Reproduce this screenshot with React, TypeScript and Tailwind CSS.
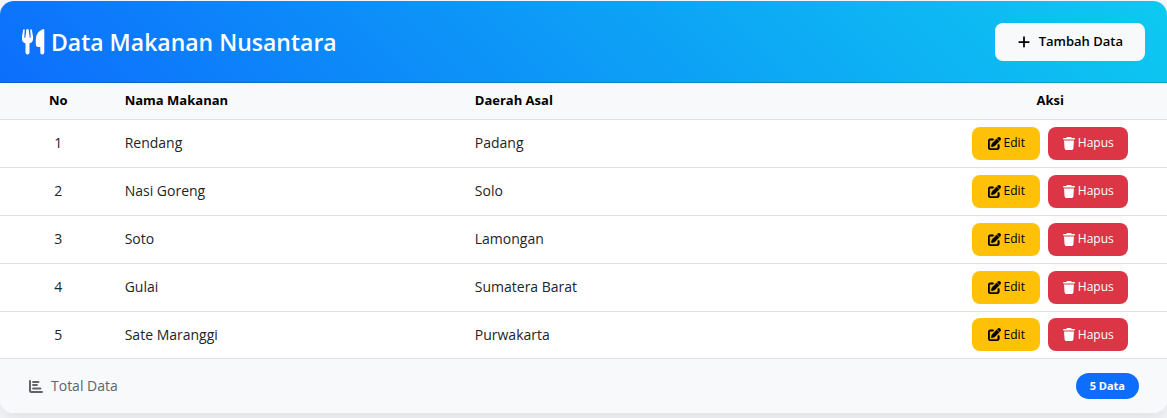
import { FaPenToSquare, FaPlus } from "react-icons/fa6";

type Food = { id: number; name: string; origin: string };

const foods: Food[] = [
  { id: 1, name: "Rendang", origin: "Padang" },
  { id: 2, name: "Nasi Goreng", origin: "Solo" },
  { id: 3, name: "Soto", origin: "Lamongan" },
  { id: 4, name: "Gulai", origin: "Sumatera Barat" },
  { id: 5, name: "Sate Maranggi", origin: "Purwakarta" },
];

function UtensilsIcon() {
  return (
    <svg viewBox="0 0 23 26" className="h-[26px] w-[23px]" fill="currentColor" aria-hidden="true">
      <path d="M1.2.7Q1.4 0 2.1.2t.6.9L2.3 8.2q0 .5.5.5t.6-.5L4.3.9Q4.4.1 5.5.1T6.7.9l.9 7.3q.1.5.6.5t.5-.5L8.300 1.100Q8.200.400 8.900.200t.9.500L11 7.500v2.300q0 3.600-3.500 4.700v9q0 2-2 2t-2-2v-9Q0 13.400 0 9.800V7.500Z" />
      <path d="M4.700 1h1.600v8H4.700Z" />
      <path d="M22.300 1.200v22.300q0 2-2 2t-2-2V18h-1.800q-2.700 0-2.700-2.700V10.500Q13.800 3 20.700.2q1.600-.5 1.600 1Z" />
    </svg>
  );
}

function TrashIcon() {
  return (
    <svg viewBox="0 0 12 13" className="h-[13px] w-3" fill="currentColor" aria-hidden="true">
      <path d="M4.300 0h3.400q.5 0 .7.500l.3.600h2.500q.8 0 .8.700t-.8.700H.8Q0 2.500 0 1.800t.8-.7h2.500l.3-.6q.2-.5.700-.5Z" />
      <path d="M1 3.400h10l-.6 8.200q-.1 1.400-1.500 1.400H3.100q-1.400 0-1.500-1.400Z" />
    </svg>
  );
}

function ChartIcon() {
  return (
    <svg
      viewBox="0 0 15 13"
      className="h-[13px] w-[15px]"
      fill="none"
      stroke="currentColor"
      strokeLinecap="round"
      aria-hidden="true"
    >
      <path d="M2 1v9.500q0 1.500 1.500 1.500H14" strokeWidth="2" />
      <path d="M5 2h5.500M5 5h4M5 8.500h7.500" strokeWidth="1.800" />
    </svg>
  );
}

function Header() {
  return (
    <header className="flex items-center justify-between border-b border-black/18 bg-[linear-gradient(45deg,#0d6efd,#0dcaf0)] px-[22px] pt-[22px] pb-[21px]">
      <h1 className="flex items-center gap-[6px] text-[23px] leading-9 font-semibold text-white">
        <UtensilsIcon />
        Data Makanan Nusantara
      </h1>
      <button
        type="button"
        className="flex h-[38px] items-center gap-2 rounded-lg bg-[#f8f9fa] px-[22px] text-[13px] font-semibold text-black"
      >
        <FaPlus aria-hidden="true" className="size-[14px]" />
        Tambah Data
      </button>
    </header>
  );
}

function FoodRow({ food }: { food: Food }) {
  return (
    <tr className="h-12 border-b border-[#dee2e6] last:h-[47px] last:border-b-0">
      <td className="px-2 text-center">{food.id}</td>
      <td className="px-2">{food.name}</td>
      <td className="px-2">{food.origin}</td>
      <td className="px-2">
        <div className="flex justify-center gap-2 text-xs">
          <button
            type="button"
            className="flex h-[33px] w-[68px] items-center justify-center gap-[3px] rounded-lg bg-[#ffc107] text-black"
          >
            <FaPenToSquare aria-hidden="true" className="size-[13px] stroke-black stroke-[20px]" />
            Edit
          </button>
          <button
            type="button"
            className="flex h-[33px] w-20 items-center justify-center gap-[3px] rounded-lg bg-[#dc3545] text-white"
          >
            <TrashIcon />
            Hapus
          </button>
        </div>
      </td>
    </tr>
  );
}

export default function App() {
  return (
    <main className="min-h-screen bg-[#f4f6f9] pt-px font-['Open_Sans','Noto_Sans',sans-serif] text-[#212529]">
      <section className="overflow-hidden rounded-[14px] bg-white shadow-[0_8px_16px_rgba(0,0,0,0.08)]">
        <Header />
        <table className="w-full table-fixed border-collapse text-sm">
          <thead>
            <tr className="h-9 border-b border-[#dee2e6] bg-[#f8f9fa] text-[13px] font-bold text-black">
              <th scope="col" className="w-[10%] px-2 text-center">No</th>
              <th scope="col" className="w-[30%] px-2 text-left">Nama Makanan</th>
              <th scope="col" className="w-[40%] px-2 text-left">Daerah Asal</th>
              <th scope="col" className="w-[20%] px-2 text-center">Aksi</th>
            </tr>
          </thead>
          <tbody>
            {foods.map((food) => (
              <FoodRow key={food.id} food={food} />
            ))}
          </tbody>
        </table>
        <footer className="flex items-center justify-between border-t border-[#dee2e6] bg-[#f8f9fa] px-7 py-[14px] text-sm text-[#5f6469]">
          <span className="flex items-center gap-2">
            <ChartIcon />
            Total Data
          </span>
          <span className="flex h-[26px] items-center rounded-full bg-[#0d6efd] px-[14px] text-[11px] font-bold text-white">
            {foods.length} Data
          </span>
        </footer>
      </section>
    </main>
  );
}
